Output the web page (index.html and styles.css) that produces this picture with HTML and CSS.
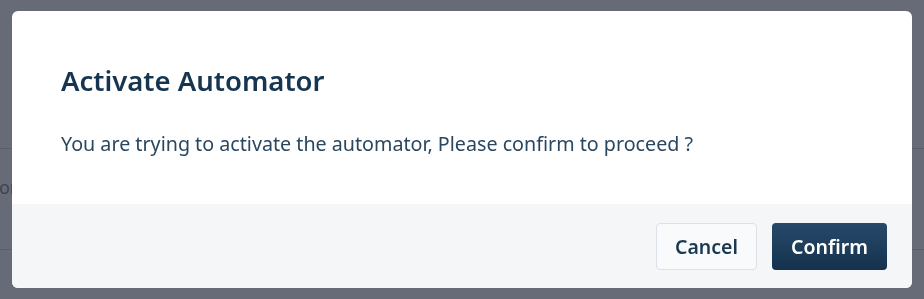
FILE: index.html
```html
<!DOCTYPE html>
<html lang="en">
<head>
<meta charset="utf-8">
<title>Activate Automator</title>
<link rel="stylesheet" href="styles.css">
</head>
<body>
<div class="page">
  <div class="page-row page-row-text"><span class="page-text">Operator</span></div>
  <div class="page-row"></div>
</div>
<div class="overlay"></div>
<div class="modal" role="dialog" aria-labelledby="modal-title">
  <div class="modal-body">
    <h2 class="modal-title" id="modal-title">Activate Automator</h2>
    <p class="modal-text">You are trying to activate the automator, Please confirm to proceed ?</p>
  </div>
  <div class="modal-footer">
    <button class="btn btn-secondary" type="button">Cancel</button>
    <button class="btn btn-primary" type="button">Confirm</button>
  </div>
</div>
</body>
</html>
```

FILE: styles.css
```css
html, body {
  margin: 0;
  padding: 0;
  height: 100%;
}
body {
  background: #ffffff;
  font-family: "Noto Sans", "Open Sans", "Liberation Sans", sans-serif;
  overflow: hidden;
}
.page {
  height: 299px;
  box-sizing: border-box;
  overflow: hidden;
  padding-top: 148px;
  display: flex;
  flex-direction: column;
}
.page-row {
  height: 101px;
  flex: none;
  border-top: 1px solid #c8cad0;
}
.page-row-text {
  box-sizing: border-box;
  padding-top: 26px;
}
.page-text {
  display: block;
  margin-left: -60px;
  font-size: 18px;
  line-height: 24px;
  color: #555a66;
}
.overlay {
  position: fixed;
  inset: 0;
  background: rgba(55, 60, 77, 0.76);
}
.modal {
  position: fixed;
  left: 12px;
  top: 11px;
  width: 900px;
  height: 277px;
  background: #ffffff;
  border-radius: 6px;
  overflow: hidden;
  display: flex;
  flex-direction: column;
}
.modal-body {
  flex: 1;
  padding: 52px 49px 0;
}
.modal-title {
  margin: 0;
  font-size: 27.5px;
  line-height: 36px;
  font-weight: 600;
  color: #163550;
}
.modal-text {
  margin: 32px 0 0;
  font-size: 19.7px;
  line-height: 26px;
  color: #2a4760;
}
.modal-footer {
  height: 84px;
  flex: none;
  box-sizing: border-box;
  background: #f5f6f8;
  display: flex;
  justify-content: flex-end;
  align-items: center;
  gap: 15px;
  padding: 0 25px;
}
.btn {
  height: 47px;
  border-radius: 4px;
  font-family: inherit;
  font-size: 19.5px;
  font-weight: 600;
  cursor: pointer;
  padding: 0;
}
.btn-secondary {
  width: 101px;
  background: #f9fafb;
  border: 1px solid #dbe1e8;
  color: #1b3a52;
}
.btn-primary {
  width: 115px;
  border: none;
  color: #ffffff;
  background: linear-gradient(#27496a, #14324d);
}
```
